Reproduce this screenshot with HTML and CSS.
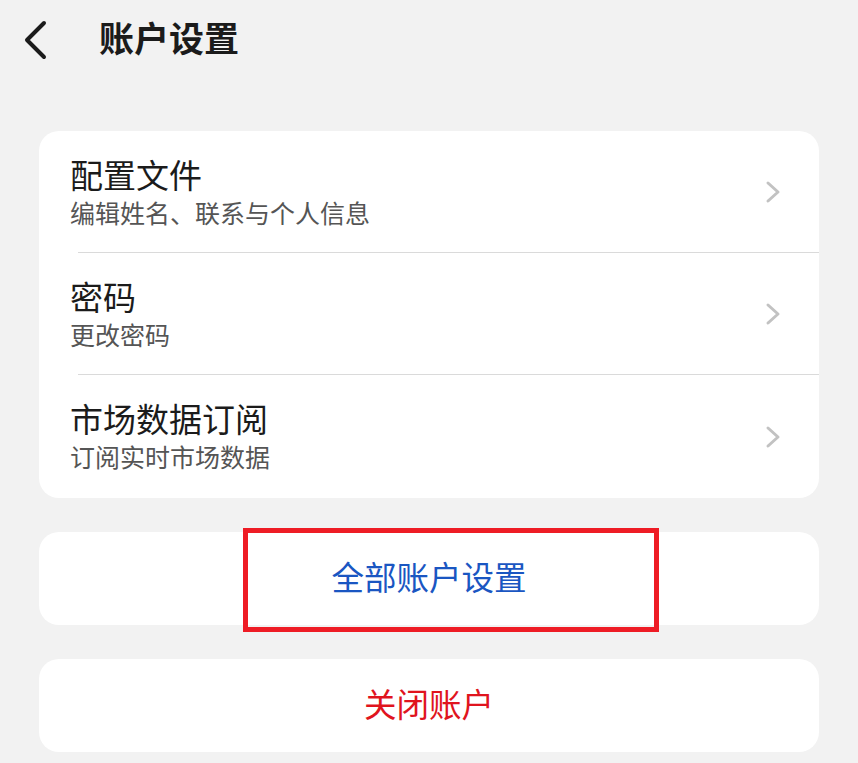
FILE: index.html
```html
<!DOCTYPE html>
<html lang="zh-CN">
<head>
    <meta charset="UTF-8">
    <title>账户设置</title>
    <link rel="stylesheet" href="styles.css">
</head>
<body>
    <header class="top-bar">
        <svg class="back-icon" width="30" height="40" viewBox="0 0 30 40">
            <polyline points="20,3 3,20 20,37" />
        </svg>
        <h1>账户设置</h1>
    </header>

    <main class="content">
        <div class="card list-card">
            <div class="list-row">
                <div class="row-text">
                    <div class="row-title">配置文件</div>
                    <div class="row-sub">编辑姓名、联系与个人信息</div>
                </div>
                <svg class="chevron" width="16" height="24" viewBox="0 0 16 24">
                    <polyline points="3,3 13,12 3,21" />
                </svg>
            </div>
            <div class="list-row">
                <div class="row-text">
                    <div class="row-title">密码</div>
                    <div class="row-sub">更改密码</div>
                </div>
                <svg class="chevron" width="16" height="24" viewBox="0 0 16 24">
                    <polyline points="3,3 13,12 3,21" />
                </svg>
            </div>
            <div class="list-row">
                <div class="row-text">
                    <div class="row-title">市场数据订阅</div>
                    <div class="row-sub">订阅实时市场数据</div>
                </div>
                <svg class="chevron" width="16" height="24" viewBox="0 0 16 24">
                    <polyline points="3,3 13,12 3,21" />
                </svg>
            </div>
        </div>

        <div class="card action-card">
            <span class="action-link">全部账户设置</span>
            <div class="highlight-box"></div>
        </div>

        <div class="card action-card">
            <span class="action-danger">关闭账户</span>
        </div>
    </main>
</body>
</html>
```

FILE: styles.css
```css
body {
    margin: 0;
    background: #f2f2f2;
    font-family: "Liberation Sans", "Noto Sans CJK SC", sans-serif;
    color: #1b1b1b;
}

.top-bar {
    height: 80px;
    display: flex;
    align-items: center;
    padding-left: 24px;
}

.back-icon {
    fill: none;
    stroke: #1b1b1b;
    stroke-width: 4;
    stroke-linecap: round;
    stroke-linejoin: round;
}

.top-bar h1 {
    margin: 0 0 0 45px;
    font-size: 35px;
    font-weight: 700;
    line-height: 40px;
}

.content {
    padding: 51px 39px 0;
    display: flex;
    flex-direction: column;
    gap: 34px;
}

.card {
    background: #fff;
    border-radius: 20px;
}

.list-row {
    height: 122px;
    display: flex;
    align-items: center;
    justify-content: space-between;
    padding: 0 38px 0 31px;
    position: relative;
    box-sizing: border-box;
}

.list-row + .list-row::before {
    content: "";
    position: absolute;
    top: -1px;
    left: 39px;
    right: 0;
    height: 1px;
    background: #dadada;
}

.list-row:last-child {
    height: 123px;
}

.row-text {
    padding-top: 5px;
}

.row-title {
    font-size: 33px;
    line-height: 38px;
}

.row-sub {
    font-size: 25px;
    line-height: 36px;
    color: #555;
}

.chevron {
    fill: none;
    stroke: #c2c2c2;
    stroke-width: 3;
    stroke-linecap: round;
    stroke-linejoin: round;
}

.action-card {
    height: 93px;
    display: flex;
    align-items: center;
    justify-content: center;
    position: relative;
}

.action-link {
    font-size: 32.5px;
    line-height: 40px;
    color: #1a56c2;
}

.action-danger {
    font-size: 32.5px;
    line-height: 40px;
    color: #e0141e;
}

.highlight-box {
    position: absolute;
    left: 204px;
    top: -4px;
    width: 416px;
    height: 104px;
    border: 5px solid #ee1c25;
    box-sizing: border-box;
}
```
